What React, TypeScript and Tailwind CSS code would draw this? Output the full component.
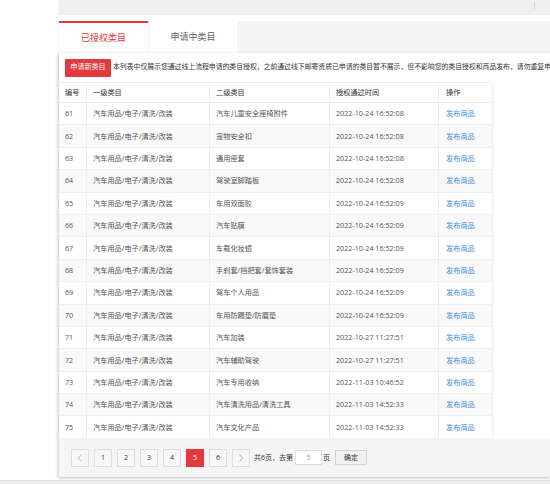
import React from "react";

const rows: [number, string, string][] = [
  [61, "汽车儿童安全座椅附件", "2022-10-24 16:52:08"],
  [62, "宠物安全扣", "2022-10-24 16:52:08"],
  [63, "通用座套", "2022-10-24 16:52:08"],
  [64, "驾驶室脚踏板", "2022-10-24 16:52:08"],
  [65, "车用双面胶", "2022-10-24 16:52:09"],
  [66, "汽车贴膜", "2022-10-24 16:52:09"],
  [67, "车载化妆镜", "2022-10-24 16:52:09"],
  [68, "手刹套/档把套/套饰套装", "2022-10-24 16:52:09"],
  [69, "驾车个人用品", "2022-10-24 16:52:09"],
  [70, "车用防踢垫/防磨垫", "2022-10-24 16:52:09"],
  [71, "汽车加装", "2022-10-27 11:27:51"],
  [72, "汽车辅助驾驶", "2022-10-27 11:27:51"],
  [73, "汽车专用收纳", "2022-11-03 10:46:52"],
  [74, "汽车清洗用品/清洗工具", "2022-11-03 14:52:33"],
  [75, "汽车文化产品", "2022-11-03 14:52:33"],
];

function PageBtn({ children, active }: { children: React.ReactNode; active?: boolean }) {
  return (
    <div
      className={
        active
          ? "w-[18px] h-[18px] flex items-center justify-center bg-[#e4393c] text-white border border-[#e4393c] text-[7px]"
          : "w-[18px] h-[18px] flex items-center justify-center bg-[#f7f7f7] text-[#333] border border-[#dddddd] text-[7px]"
      }
    >
      {children}
    </div>
  );
}

export default function App() {
  return (
    <div
      className="w-[550px] h-[484px] overflow-hidden bg-white relative flex flex-col"
      style={{ fontFamily: '"Open Sans", "Noto Sans CJK SC", sans-serif' }}
    >
      <div className="flex flex-1 min-h-0">
        <div className="w-[58px] shrink-0" />
        <div className="flex-1 min-w-0 flex flex-col">
          {/* top bar */}
          <div className="h-[15px] bg-[#efefef] flex justify-end shrink-0">
            <div className="w-px h-[7px] mt-[2px] bg-[#d5d5d5] mr-[15px]" />
          </div>
          <div className="h-[6px] shrink-0" />
          {/* tabs */}
          <div className="h-[32px] flex bg-[#f5f5f5] shrink-0 pl-px">
            <div className="w-[89px] bg-white border-t-2 border-[#e4393c] flex items-center justify-center text-[9px] text-[#e4393c]">
              已授权类目
            </div>
            <div className="w-[89px] bg-white border-l border-[#f0f0f0] flex items-center justify-center text-[9px] text-[#666]">
              申请中类目
            </div>
          </div>
          {/* panel */}
          <div className="bg-white border-l border-[#dcdcdc] shadow-[0_1px_3px_rgba(0,0,0,0.25)] flex flex-col">
            <div className="h-[29px] flex items-center pl-[6px] gap-[2px] whitespace-nowrap overflow-hidden">
              <div className="h-[18px] w-[46px] shrink-0 bg-[#e23a3e] rounded-[1px] text-white text-[7px] flex items-center justify-center">
                申请新类目
              </div>
              <span className="text-[6.85px] text-[#333]">
                本列表中仅展示您通过线上流程申请的类目授权，之前通过线下邮寄资质已申请的类目暂不展示，但不影响您的类目授权和商品发布，请勿重复申请！
              </span>
            </div>
            <div className="w-[434px] text-[7.2px]">
              <div className="flex h-[21px] items-center text-[#333] border-y border-[#eeeeee]">
                <div className="w-[28px] h-full flex items-center pl-[6px] border-r border-[#eeeeee]">编号</div>
                <div className="w-[123px] h-full flex items-center pl-[6px] border-r border-[#eeeeee]">一级类目</div>
                <div className="w-[120px] h-full flex items-center pl-[6px] border-r border-[#eeeeee]">二级类目</div>
                <div className="w-[109px] h-full flex items-center pl-[6px] border-r border-[#eeeeee]">授权通过时间</div>
                <div className="w-[54px] h-full flex items-center pl-[7px] border-r border-[#eeeeee]">操作</div>
              </div>
              {rows.map(([id, cat, time], i) => (
                <div
                  key={id}
                  className={
                    i % 2 === 1
                      ? "flex h-[22.4px] items-center text-[#555] bg-[#f9f9f9] border-b border-[#f0f0f0]"
                      : "flex h-[22.4px] items-center text-[#555] bg-white border-b border-[#f0f0f0]"
                  }
                >
                  <div className="w-[28px] h-full flex items-center pl-[6px] border-r border-[#eeeeee]">{id}</div>
                  <div className="w-[123px] h-full flex items-center pl-[6px] border-r border-[#eeeeee]">汽车用品/电子/清洗/改装</div>
                  <div className="w-[120px] h-full flex items-center pl-[6px] border-r border-[#eeeeee] whitespace-nowrap">{cat}</div>
                  <div className="w-[109px] h-full flex items-center pl-[6px] border-r border-[#eeeeee]">{time}</div>
                  <div className="w-[54px] h-full flex items-center pl-[7px] border-r border-[#eeeeee] text-[#3d8ee2]">发布商品</div>
                </div>
              ))}
            </div>
            <div className="h-[38px] bg-[#f5f5f5] flex items-center pl-[12px] gap-[5px] text-[7px] text-[#333] whitespace-nowrap">
              <PageBtn>
                <svg width="6" height="8" viewBox="0 0 6 8">
                  <path d="M4.5 0.5 L1.5 4 L4.5 7.5" fill="none" stroke="#aaa" strokeWidth="0.8" />
                </svg>
              </PageBtn>
              <PageBtn>1</PageBtn>
              <PageBtn>2</PageBtn>
              <PageBtn>3</PageBtn>
              <PageBtn>4</PageBtn>
              <PageBtn active>5</PageBtn>
              <PageBtn>6</PageBtn>
              <PageBtn>
                <svg width="6" height="8" viewBox="0 0 6 8">
                  <path d="M1.5 0.5 L4.5 4 L1.5 7.5" fill="none" stroke="#aaa" strokeWidth="0.8" />
                </svg>
              </PageBtn>
              <span className="-ml-[1px]">共6页，去第</span>
              <div className="-ml-[3px] w-[27px] h-[15px] bg-white border border-[#dddddd] flex items-center justify-center text-[#999]">
                5
              </div>
              <span className="-ml-[4px]">页</span>
              <div className="w-[32px] h-[15px] bg-[#f1f1f1] border border-[#d5d5d5] flex items-center justify-center text-[#333]">
                确定
              </div>
            </div>
          </div>
        </div>
      </div>
      <div className="h-[4px] bg-[#eeeeee] mt-[4px] shrink-0 border-t border-[#e0e0e0]" />
    </div>
  );
}
